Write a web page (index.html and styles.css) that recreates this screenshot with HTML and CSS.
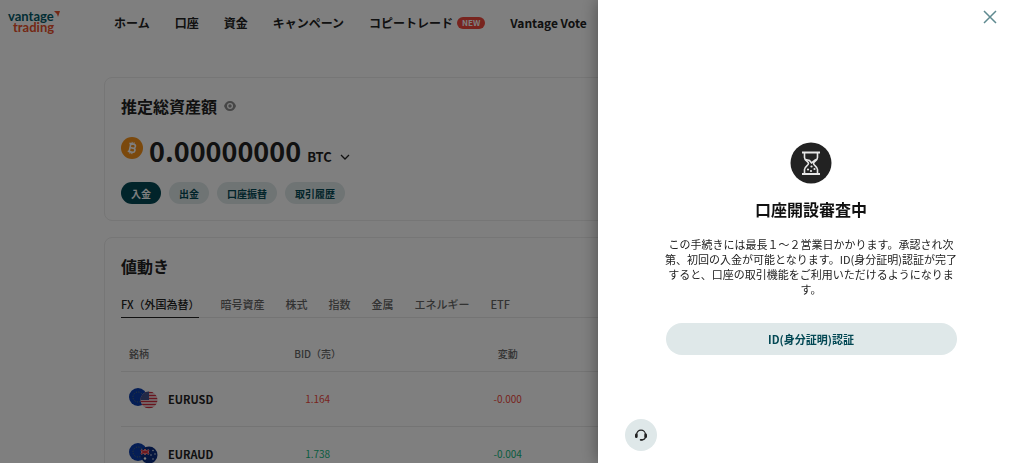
FILE: index.html
```html
<!DOCTYPE html>
<html lang="ja">
<head>
    <meta charset="UTF-8">
    <meta name="viewport" content="width=device-width, initial-scale=1.0">
    <title>Vantage Trading</title>
    <link rel="stylesheet" href="styles.css">
</head>
<body>
    <header class="header">
        <a href="#" class="logo" aria-label="vantage trading">
            <span class="logo-top">vantage<svg class="logo-mark" viewBox="0 0 6 6"><path d="M0 0H6L4 6L3 3Z" fill="#e8502a"/></svg></span>
            <span class="logo-bottom">trading</span>
        </a>
        <nav class="nav">
            <a href="#">ホーム</a>
            <a href="#">口座</a>
            <a href="#">資金</a>
            <a href="#">キャンペーン</a>
            <a href="#">コピートレード<span class="badge">NEW</span></a>
            <a href="#">Vantage Vote</a>
        </nav>
    </header>

    <main class="main">
        <section class="card">
            <div class="card-head">
                <h2>推定総資産額</h2>
                <button class="icon-btn" aria-label="残高を表示">
                    <svg width="12" height="12" viewBox="0 0 12 12">
                        <path d="M6 1C9 1 11 3 12 6C11 9 9 11 6 11C3 11 1 9 0 6C1 3 3 1 6 1Z" fill="#8c8c8c"/>
                        <circle cx="6" cy="6" r="3" fill="#fff"/>
                        <circle cx="6" cy="6" r="1.7" fill="#8c8c8c"/>
                    </svg>
                </button>
            </div>
            <div class="balance">
                <svg class="coin" width="22" height="22" viewBox="0 0 22 22">
                    <circle cx="11" cy="11" r="11" fill="#f7931a"/>
                    <g transform="rotate(12 11 11)" fill="none" stroke="#fff" stroke-width="1.6">
                        <path d="M7.5 7H12a2 2 0 0 1 0 4H9H12.4a2 2 0 0 1 0 4H7.5M9 7V15"/>
                        <path d="M10 5V7M12 5V7M10 15V17M12 15V17" stroke-width="1.1"/>
                    </g>
                </svg>
                <span class="amount">0.00000000</span>
                <button class="currency">BTC
                    <svg width="10" height="6" viewBox="0 0 10 6"><path d="M1 1L5 5L9 1" fill="none" stroke="currentColor" stroke-width="1.3"/></svg>
                </button>
            </div>
            <div class="actions">
                <button class="pill pill-primary">入金</button>
                <button class="pill">出金</button>
                <button class="pill">口座振替</button>
                <button class="pill">取引履歴</button>
            </div>
        </section>

        <section class="card">
            <div class="card-head">
                <h2>値動き</h2>
            </div>
            <div class="tabs">
                <button class="tab active">FX（外国為替）</button>
                <button class="tab">暗号資産</button>
                <button class="tab">株式</button>
                <button class="tab">指数</button>
                <button class="tab">金属</button>
                <button class="tab">エネルギー</button>
                <button class="tab">ETF</button>
            </div>
            <table class="prices">
                <colgroup>
                    <col class="col-name">
                    <col class="col-value">
                    <col class="col-value">
                    <col>
                </colgroup>
                <thead>
                    <tr><th>銘柄</th><th>BID（売）</th><th>変動</th><th></th></tr>
                </thead>
                <tbody>
                    <tr>
                        <td>
                            <div class="symbol">
                                <svg width="29" height="21" viewBox="0 0 29 21">
                                    <defs>
                                        <clipPath id="us"><circle cx="20" cy="12" r="8.5"/></clipPath>
                                    </defs>
                                    <circle cx="9" cy="9" r="9" fill="#0a3cab"/>
                                    <circle cx="9" cy="9" r="5" fill="none" stroke="#6f7f5a" stroke-width="1" stroke-dasharray="1 1.6"/>
                                    <g clip-path="url(#us)">
                                        <rect x="11" y="3" width="18" height="18" fill="#f2f2f2"/>
                                        <path d="M11 4.5H29M11 7.5H29M11 10.5H29M11 13.5H29M11 16.5H29M11 19.5H29" stroke="#d02b3d" stroke-width="1.5"/>
                                        <rect x="11" y="3" width="9" height="9" fill="#44528c"/>
                                    </g>
                                </svg>
                                <span>EURUSD</span>
                            </div>
                        </td>
                        <td class="down">1.164</td>
                        <td class="down">-0.000</td>
                        <td></td>
                    </tr>
                    <tr>
                        <td>
                            <div class="symbol">
                                <svg width="29" height="21" viewBox="0 0 29 21">
                                    <circle cx="9" cy="9" r="9" fill="#0a3cab"/>
                                    <circle cx="9" cy="9" r="5" fill="none" stroke="#6f7f5a" stroke-width="1" stroke-dasharray="1 1.6"/>
                                    <circle cx="20" cy="12" r="8.5" fill="#0b2d80"/>
                                    <path d="M12 7L20 11M20 7L12 11M16 6V12M12 9H20" stroke="#fff" stroke-width="1.8"/>
                                    <path d="M12 7L20 11M20 7L12 11M16 6V12M12 9H20" stroke="#e0303c" stroke-width="1.2"/>
                                    <g fill="#fff"><circle cx="16" cy="15.5" r="1.2"/><circle cx="24" cy="7.5" r=".7"/><circle cx="26" cy="11" r=".7"/><circle cx="22" cy="12" r=".7"/><circle cx="24" cy="16" r=".7"/></g>
                                </svg>
                                <span>EURAUD</span>
                            </div>
                        </td>
                        <td class="up">1.738</td>
                        <td class="up">-0.004</td>
                        <td></td>
                    </tr>
                </tbody>
            </table>
        </section>
    </main>

    <div class="overlay"></div>

    <aside class="drawer" role="dialog" aria-labelledby="drawer-title">
        <div class="drawer-head">
            <button class="icon-btn" aria-label="閉じる">
                <svg width="14" height="14" viewBox="0 0 14 14"><path d="M1 1L13 13M13 1L1 13" stroke="#5f8a90" stroke-width="1.5"/></svg>
            </button>
        </div>
        <div class="drawer-body">
            <svg width="42" height="42" viewBox="0 0 42 42">
                <circle cx="21" cy="21" r="20.5" fill="#222"/>
                <g fill="none" stroke="#e6e6e6" stroke-width="1.6">
                    <path d="M12 10.5H30M12 32H30" stroke-width="2"/>
                    <path d="M14.5 11V15.5C14.5 18.5 18.5 19.5 18.5 21.5S14.5 24.5 14.5 27.5V31.5"/>
                    <path d="M27.5 11V15.5C27.5 18.5 23.5 19.5 23.5 21.5S27.5 24.5 27.5 27.5V31.5"/>
                    <path d="M15.5 17.5L19.5 18.5L21.5 21L26 17.5"/>
                </g>
                <g fill="#e6e6e6"><circle cx="21.5" cy="24.5" r="1.1"/><circle cx="18" cy="27.5" r="1.1"/><circle cx="24.5" cy="27" r="1.1"/><circle cx="21" cy="29" r="1.1"/></g>
            </svg>
            <h3 id="drawer-title">口座開設審査中</h3>
            <p>この手続きには最長１～２営業日かかります。承認され次第、初回の入金が可能となります。ID(身分証明)認証が完了すると、口座の取引機能をご利用いただけるようになります。</p>
            <button class="verify">ID(身分証明)認証</button>
        </div>
        <button class="support" aria-label="サポート">
            <svg width="14" height="14" viewBox="0 0 14 14">
                <path d="M2.6 8.5V6.5A4.4 4.4 0 0 1 11.4 6.5V8.5C11.4 10.5 10 11.8 7.5 11.8" fill="none" stroke="#222" stroke-width="1.3"/>
                <rect x="1" y="5.6" width="2.6" height="4.4" rx="1.2" fill="#222"/>
                <rect x="10.4" y="5.6" width="2.6" height="4.4" rx="1.2" fill="#222"/>
                <rect x="5.8" y="11" width="3" height="1.7" rx=".8" fill="#222"/>
            </svg>
        </button>
    </aside>
</body>
</html>
```
FILE: styles.css
```css
* {
    box-sizing: border-box;
    margin: 0;
    padding: 0;
    font-family: 'Noto Sans CJK JP', sans-serif;
}

body {
    background-color: #fff;
    color: #222;
    height: 100vh;
    overflow: hidden;
}

a {
    color: inherit;
    text-decoration: none;
}

button {
    border: none;
    background: none;
    color: inherit;
    cursor: pointer;
}

svg {
    display: block;
    flex-shrink: 0;
}

.header {
    display: flex;
    align-items: center;
    gap: 56px;
    height: 45px;
    padding: 0 8px;
}

.logo {
    display: flex;
    flex-direction: column;
    width: 50px;
    padding-bottom: 2px;
}

.logo span {
    font-family: Lato, sans-serif;
    font-size: 13px;
    font-weight: 700;
    line-height: 11px;
}

.logo .logo-top {
    display: flex;
    color: #035b68;
}

.logo .logo-bottom {
    padding-left: 5px;
    color: #e8502a;
}

.logo-mark {
    width: 6px;
    height: 6px;
}

.nav {
    display: flex;
    gap: 25px;
    font-size: 12px;
    font-weight: 700;
    white-space: nowrap;
}

.nav a {
    display: flex;
    align-items: center;
    gap: 4px;
}

.badge {
    padding: 0 5px;
    border-radius: 6px;
    background-color: #f0483c;
    color: #fff;
    font-size: 8px;
    line-height: 12px;
}

.main {
    display: flex;
    flex-direction: column;
    gap: 16px;
    padding: 32px 104px 0;
}

.card {
    padding: 16px;
    border: 1px solid #ececec;
    border-radius: 8px;
}

.card-head {
    display: flex;
    align-items: center;
    gap: 7px;
}

.card-head h2 {
    font-size: 16px;
    font-weight: 700;
    line-height: 24px;
}

.balance {
    display: flex;
    align-items: baseline;
    gap: 6px;
    margin: 13px 0 11px;
}

.coin {
    align-self: flex-start;
    margin-top: 6px;
}

.amount {
    font-size: 27px;
    font-weight: 700;
    line-height: 40px;
}

.currency {
    display: flex;
    align-items: center;
    gap: 8px;
    font-size: 13px;
    font-weight: 700;
}

.actions {
    display: flex;
    gap: 8px;
}

.pill {
    height: 22px;
    padding: 0 10px;
    border-radius: 11px;
    background-color: #dfe8e9;
    color: #034854;
    font-size: 10px;
    font-weight: 700;
}

.pill-primary {
    background-color: #034854;
    color: #fff;
}

.tabs {
    display: flex;
    gap: 21px;
    margin-top: 15px;
    border-bottom: 1px solid #e8e8e8;
}

.tab {
    height: 25px;
    margin-bottom: -1px;
    padding-bottom: 2px;
    border-bottom: 1px solid transparent;
    color: #666;
    font-size: 11px;
    font-weight: 500;
}

.tab.active {
    border-color: #222;
    color: #222;
}

.prices {
    width: 100%;
    border-collapse: collapse;
    table-layout: fixed;
    text-align: center;
    font-size: 10px;
}

.col-name {
    width: 13%;
}

.col-value {
    width: 24.3%;
}

.prices th,
.prices td {
    height: 55px;
    border-bottom: 1px solid #e8e8e8;
}

.prices th {
    height: 53px;
    padding-top: 18px;
    color: #666;
    font-weight: 500;
}

.prices th:first-child,
.prices td:first-child {
    padding-left: 8px;
    text-align: left;
}

.symbol {
    display: flex;
    align-items: center;
    gap: 10px;
    font-size: 11px;
    font-weight: 700;
}

.down {
    color: #f0483c;
}

.up {
    color: #10b981;
}

.overlay {
    position: fixed;
    inset: 0;
    background-color: rgba(0, 0, 0, 0.5);
}

.drawer {
    position: fixed;
    top: 0;
    right: 0;
    bottom: 0;
    display: flex;
    flex-direction: column;
    width: 41.6%;
    background-color: #fff;
    box-shadow: 0 0 16px rgba(0, 0, 0, 0.4);
}

.drawer-head {
    display: flex;
    justify-content: flex-end;
    padding: 10px 27px;
}

.drawer-body {
    flex: 1;
    display: flex;
    flex-direction: column;
    align-items: center;
    justify-content: center;
    padding: 0 66px;
    text-align: center;
}

.drawer-body h3 {
    margin: 13px 0 16px;
    color: #111;
    font-size: 16px;
    font-weight: 700;
    line-height: 24px;
}

.drawer-body p {
    font-size: 11px;
    line-height: 15px;
}

.verify {
    width: 99%;
    height: 32px;
    margin-top: 26px;
    border-radius: 16px;
    background-color: #dfe8e9;
    color: #034854;
    font-size: 11px;
    font-weight: 700;
}

/* floats over the drawer content */
.support {
    position: absolute;
    left: 27px;
    bottom: 12px;
    display: flex;
    align-items: center;
    justify-content: center;
    width: 32px;
    height: 32px;
    border-radius: 50%;
    background-color: #dfe8e9;
}
```
